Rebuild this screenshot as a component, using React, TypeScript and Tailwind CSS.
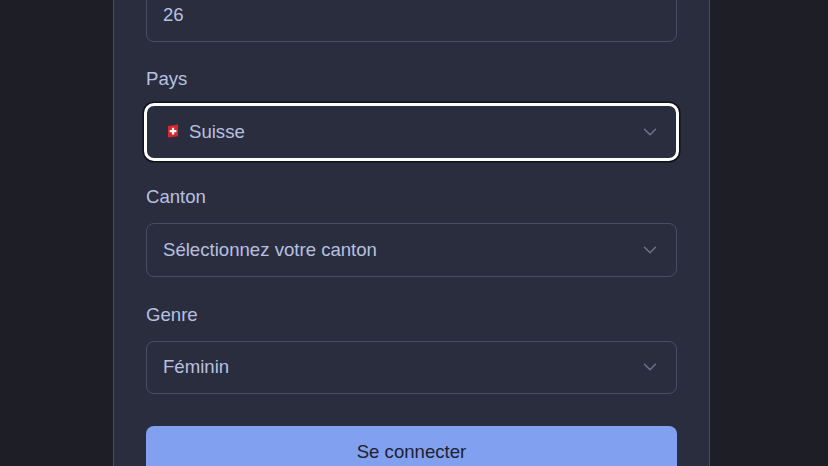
import React from 'react';

const ChevronDown = () => (
  <svg width="16" height="16" viewBox="0 0 16 16" fill="none" stroke="#6e738d" strokeWidth="1.5" strokeLinecap="round" strokeLinejoin="round">
    <path d="M2.5 5.25 8 10.75l5.5-5.5" />
  </svg>
);

const SwissFlag = () => (
  <svg width="14" height="16" viewBox="0 0 14 16" className="-mt-[2px] ml-[3px] shrink-0">
    <path d="M2 2.9 12 1.6v11.7L2 14.6z" fill="#d8262c" />
    <path d="M5.9 4.7h2.3v2.2h2.2v2.3H8.2v2.2H5.9V9.2H3.7V6.9h2.2z" fill="#fff" />
  </svg>
);

const Field = ({ label, children }: { label: string; children: React.ReactNode }) => (
  <div className="mt-[26px]">
    <div className="mb-[14px] text-[18.6px] leading-[24px] text-[#b8c0e0]">{label}</div>
    {children}
  </div>
);

const Select = ({ children, focused }: { children: React.ReactNode; focused?: boolean }) => (
  <div
    className={`flex h-[53.75px] items-center justify-between rounded-lg border pl-4 pr-[18.5px] text-[18.6px] text-[#b8c0e0] ${
      focused
        ? 'border-transparent outline-[3px] -outline-offset-1 outline-white shadow-[0_0_0_3.5px_#11111b]'
        : 'border-[#494d64]'
    }`}
  >
    {children}
    <ChevronDown />
  </div>
);

export default function App() {
  return (
    <div className="h-[466px] overflow-hidden bg-[#1e1e26] font-['Liberation_Sans',Arial,sans-serif]">
      <div className="ml-[113px] h-[477px] w-[597px] border-x border-[#494d64] bg-[#2a2d3e] px-8">
        <div className="-mb-px -mt-[11px] flex h-[53px] items-center rounded-lg border border-[#494d64] px-4 pb-[2px] text-[18.6px] text-[#b8c0e0]">
          26
        </div>
        <Field label="Pays">
          <Select focused>
            <span className="flex items-center gap-[9px]">
              <SwissFlag />
              Suisse
            </span>
          </Select>
        </Field>
        <Field label="Canton">
          <Select>Sélectionnez votre canton</Select>
        </Field>
        <Field label="Genre">
          <Select>Féminin</Select>
        </Field>
        <div className="mt-[31.75px] flex h-[52px] items-center justify-center rounded-lg bg-[#82a0f0] text-[18.6px] text-[#1e2030]">
          Se connecter
        </div>
      </div>
    </div>
  );
}
